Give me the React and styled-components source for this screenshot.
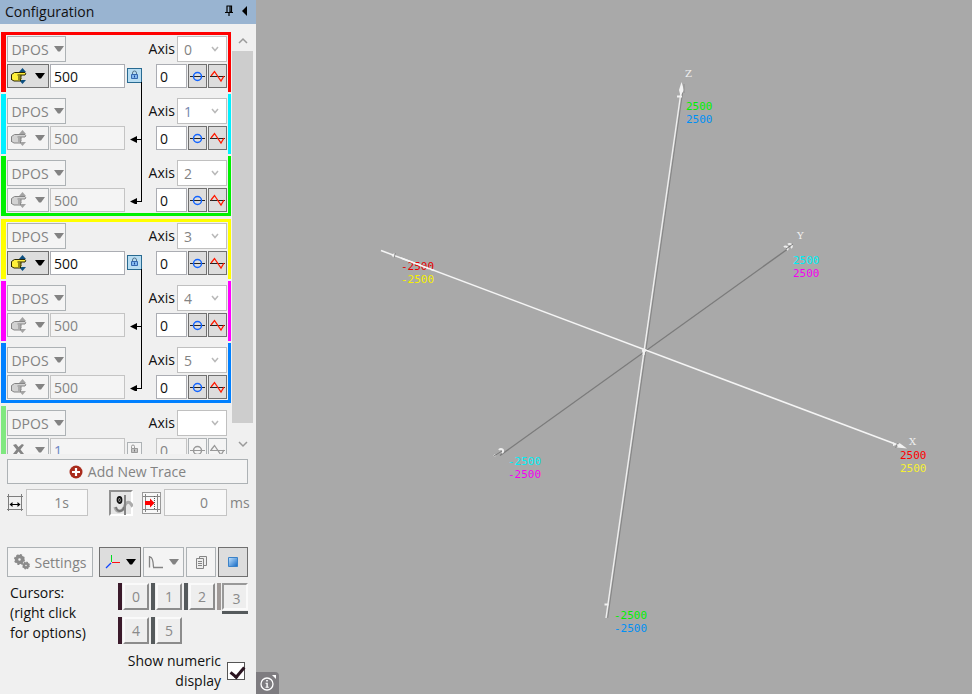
import styled, { createGlobalStyle } from 'styled-components'
import { useState } from 'react'

const GROUPS = [
  [
    { color: '#ff0000', axis: '0', edge: 'top', master: true },
    { color: '#00f0ff', axis: '1' },
    { color: '#00f000', axis: '2', edge: 'bottom' },
  ],
  [
    { color: '#ffff00', axis: '3', edge: 'top', master: true },
    { color: '#ff00ff', axis: '4' },
    { color: '#0080ff', axis: '5', edge: 'bottom' },
  ],
]

const CURSORS = [
  { id: 0, color: '#3b1a2b' },
  { id: 1, color: '#555a5c' },
  { id: 2, color: '#555a5c' },
  { id: 3, color: '#a09a98' },
  { id: 4, color: '#3b1a2b' },
  { id: 5, color: '#555a5c' },
]

function App() {
  return (
    <Page>
      <GlobalStyle />
      <Sidebar />
      <Plot />
    </Page>
  )
}

export default App

function Sidebar() {
  const [active, setActive] = useState(3)

  return (
    <Aside>
      <Header>
        <Title>Configuration</Title>
        <HeaderButton aria-label="Pin"><PinIcon /></HeaderButton>
        <HeaderButton aria-label="Collapse"><CollapseIcon /></HeaderButton>
      </Header>

      <TraceArea>
        <TraceList>
          {GROUPS.map((rows, index) => (
            <TraceGroup key={index}>
              {rows.map((row) => <Trace key={row.axis} {...row} />)}
              <LinkLine />
            </TraceGroup>
          ))}
          <Trace color="#80e880" axis="" empty />
        </TraceList>
        <ScrollBar>
          <ScrollArrow aria-label="Scroll up"><ChevronIcon up /></ScrollArrow>
          <ScrollTrack><ScrollThumb /></ScrollTrack>
          <ScrollArrow aria-label="Scroll down"><ChevronIcon /></ScrollArrow>
        </ScrollBar>
      </TraceArea>

      <Footer>
        <AddButton disabled><PlusIcon />Add New Trace</AddButton>

        <TimeRow>
          <SpanIcon />
          <TimeInput aria-label="Time span" defaultValue="1s" $width={62} disabled />
          <ScrubButton aria-label="Scrub"><ScrubIcon /></ScrubButton>
          <OffsetButton aria-label="Trigger offset"><OffsetIcon /></OffsetButton>
          <TimeInput id="offset" defaultValue="0" $width={63} disabled />
          <Unit htmlFor="offset">ms</Unit>
        </TimeRow>

        <ToolRow>
          <ToolButton $width={86} disabled><GearsIcon />Settings</ToolButton>
          <ToolButton $width={42} aria-label="3D view"><AxesIcon /><Triangle /></ToolButton>
          <ToolButton $width={41} disabled aria-label="Scale"><ScaleIcon /><Triangle /></ToolButton>
          <ToolButton $width={30} disabled aria-label="Copy"><CopyIcon /></ToolButton>
          <ToolButton $width={30} aria-label="Stop"><StopIcon /></ToolButton>
        </ToolRow>

        <CursorRow>
          <CursorText>Cursors:<br />(right click<br />for options)</CursorText>
          <CursorGrid>
            {CURSORS.map(({ id, color }) => (
              <CursorButton key={id} $color={color} $active={active === id} onClick={() => setActive(id)}>
                <span>{id}</span>
              </CursorButton>
            ))}
          </CursorGrid>
        </CursorRow>

        <NumericRow>
          <label htmlFor="numeric">Show numeric<br />display</label>
          <CheckBox id="numeric" type="checkbox" defaultChecked />
        </NumericRow>
      </Footer>
    </Aside>
  )
}

function Trace({ color, axis, edge, master, empty }) {
  const name = empty ? 'new' : axis

  return (
    <TraceRow $color={color} $edge={edge} $empty={empty}>
      <Line $height={26}>
        <ParamButton disabled>DPOS<Triangle /></ParamButton>
        <AxisLabel htmlFor={`axis-${name}`}>Axis</AxisLabel>
        <SelectWrap>
          <AxisSelect id={`axis-${name}`} defaultValue={axis} $blue={axis === '1'} disabled>
            <option>{axis}</option>
          </AxisSelect>
          <ChevronIcon small />
        </SelectWrap>
      </Line>
      <Line $height={24}>
        <ModeButton disabled={!master} aria-label="Scale mode">
          {empty ? <CrossIcon /> : <HandIcon on={master} />}
          <Triangle />
        </ModeButton>
        <NumberInput aria-label="Scale" defaultValue={empty ? '1' : '500'} $width={75} $blue={empty} disabled={!master} />
        <LinkCell>
          {(master || empty) && (
            <LockButton disabled={empty} aria-label="Link"><LockIcon open={empty} /></LockButton>
          )}
        </LinkCell>
        <NumberInput aria-label="Offset" defaultValue="0" $width={31} disabled={empty} />
        <SquareButton disabled={empty} aria-label="Centre"><CentreIcon off={empty} /></SquareButton>
        <SquareButton disabled={empty} aria-label="Wave"><WaveIcon off={empty} /></SquareButton>
      </Line>
    </TraceRow>
  )
}

function Plot() {
  return (
    <PlotArea>
      <PlotSvg viewBox="256 0 716 694" preserveAspectRatio="xMinYMin meet" role="img" aria-label="3D axes">
        <g fill="none">
          <path d="M500 455.500L787 249.500" stroke="#7b7b7b" strokeWidth="1.400" />
          <path d="M606.500 618L681.500 92" stroke="#858585" strokeWidth="1" transform="translate(1.200 0)" />
          <path d="M606 618L681 92" stroke="#f0f0f0" strokeWidth="1.400" />
          <path d="M381 250.500L902 446.500" stroke="#f5f5f5" strokeWidth="1.500" />
        </g>
        <g fill="#f2f2f2">
          <path d="M681.500 82L684 90L680.500 96L679 90Z" />
          <path d="M677 95.500h5v2h-5zM604.500 603.500h4v2h-4z" />
          <path d="M907 448.500L897 447.500L899.500 443Z" />
          <path d="M893 442l3 3l-3 1z" />
          <circle cx="644" cy="350.500" r="2" />
          <path d="M642.500 350h3l-1 5h-2z" />
          <path d="M391.500 255l3-2-1 5z" />
        </g>
        <g fill="none" stroke="#ededed" strokeWidth="2">
          <path d="M784 247a2 2 0 1 1 3 3M788 244.500a2.200 2.200 0 1 1 3 3.500M499 450a2.200 2.200 0 1 1 3 3" />
          <path d="M494 456l1.500-1" />
        </g>
        <path d="M786 249l7-5M494 456l8-5" stroke="#777" strokeWidth="1" />
        <path d="M684 84v9M895.500 448l2-5M395.500 253l-1.500 5" stroke="#8d8d8d" strokeWidth="1" />

        <Tick x="401" y="270" fill="#e60000">-2500</Tick>
        <path d="M401 258L434 270.500" stroke="#f5f5f5" strokeWidth="1.500" />
        <Tick x="401" y="283" fill="#f5f000">-2500</Tick>
        <Tick x="686" y="110" fill="#00f000">2500</Tick>
        <Tick x="686" y="123" fill="#0090f5">2500</Tick>
        <Tick x="793" y="264" fill="#00f0f5">2500</Tick>
        <Tick x="793" y="277" fill="#f500f0">2500</Tick>
        <Tick x="508" y="465" fill="#00f0f5">-2500</Tick>
        <Tick x="508" y="478" fill="#f500f0">-2500</Tick>
        <Tick x="614" y="619" fill="#00f000">-2500</Tick>
        <Tick x="614" y="632" fill="#0090f5">-2500</Tick>
        <Tick x="900" y="459" fill="#ff0000">2500</Tick>
        <Tick x="900" y="472" fill="#f5f032">2500</Tick>
        <AxisName x="685" y="77">Z</AxisName>
        <AxisName x="797" y="239">Y</AxisName>
        <AxisName x="909" y="445">X</AxisName>
      </PlotSvg>
      <InfoButton aria-label="Information">
        <svg width="18" height="18" viewBox="0 0 18 18">
          <circle cx="8" cy="10" r="6" fill="none" stroke="#fff" strokeWidth="1.300" />
          <path d="M7.200 6h1.600v1.600H7.200zM6.500 8.800h2.300v4h1v1H6.500v-1h.9v-3h-.9z" fill="#fff" />
          <path d="M13 1h4v4z" fill="#fff" />
        </svg>
      </InfoButton>
    </PlotArea>
  )
}

/* icons */

function Triangle() {
  return (
    <svg width="10" height="6" viewBox="0 0 10 6">
      <path d="M0 0h10L6 5.500H4z" fill="currentColor" />
    </svg>
  )
}

function ChevronIcon({ up, small }) {
  return (
    <svg width="10" height="8" viewBox="0 0 10 8">
      <path
        d={small ? 'M2 2l3 3.500L8 2' : up ? 'M1 6l4-4 4 4' : 'M1 2l4 4 4-4'}
        fill="none"
        stroke={small ? '#b9b9b9' : '#9a9a9a'}
        strokeWidth="1.500"
      />
    </svg>
  )
}

function PinIcon() {
  return (
    <svg width="8" height="12" viewBox="0 0 8 12">
      <path d="M1.500 1h5M2 1v6M5 1h1.500v6H5zM0 7.500h8M4 7v4" fill="none" stroke="#000" strokeWidth="1.200" />
    </svg>
  )
}

function CollapseIcon() {
  return (
    <svg width="5" height="10" viewBox="0 0 5 10"><path d="M5 0v10L0 5z" /></svg>
  )
}

function HandIcon({ on }) {
  const arrow = on ? '#0d4f80' : '#a3a3a3'
  return (
    <svg width="16" height="18" viewBox="0 0 16 18">
      <path d="M8 5l3.500-4L15 5zM8 13h7l-3.500 4z" fill={arrow} />
      <path
        d="M.5 7.500l3-2H14q1.500 1 0 2.500H10l.5 5-1.500 1H3l-2.500-1.500z"
        fill={on ? '#fff03a' : '#d2d2d2'}
      />
      <path
        d="M.5 13V7.500l3-2H14q1.500 1.200 0 2.500H6.500M10 8v2H7M10 10.300v1.700H7M9.500 12.300v1.700H3L.5 12.500"
        fill="none"
        stroke={on ? '#2a2600' : '#858585'}
      />
    </svg>
  )
}

function CrossIcon() {
  return (
    <svg width="16" height="18" viewBox="0 0 16 18">
      <path d="M2 4l3-1 2.500 3L11 3l2 1-3.500 4.500L13 13l-2.500 1-3-3.500L5 14l-3-1 3.500-4.500z" fill="#858585" />
    </svg>
  )
}

function LockIcon({ open }) {
  return (
    <svg width="9" height="11" viewBox="0 0 9 11">
      <path
        d={open ? 'M1.500 4V2.500a1.500 1.500 0 0 1 3 0V5' : 'M2.500 5V3a2 2 0 0 1 4 0v2'}
        fill="none"
        stroke={open ? '#999' : '#54738b'}
      />
      <path d="M1.500 4.500h6v4h-6z" fill={open ? '#c5c5c5' : '#82b8ef'} stroke={open ? '#999' : '#3468b0'} />
      <path d="M4.500 5.500v2" stroke={open ? '#777' : '#174791'} />
    </svg>
  )
}

function CentreIcon({ off }) {
  return (
    <svg width="15" height="12" viewBox="0 0 15 12">
      <path d="M0 6.500h15" stroke={off ? '#999' : '#222'} />
      <circle cx="7.500" cy="6.500" r="4" fill="none" stroke={off ? '#999' : '#1264ff'} strokeWidth="1.500" />
    </svg>
  )
}

function WaveIcon({ off }) {
  return (
    <svg width="15" height="14" viewBox="0 0 15 14">
      <path d="M0 7.500h15" stroke={off ? '#999' : '#222'} />
      <path d="M1 7l3.500-4.500L11 12l3-5" fill="none" stroke={off ? '#999' : '#ff1a00'} strokeWidth="1.300" />
    </svg>
  )
}

function LinkLine() {
  return (
    <LinkSvg width="15" height="122" viewBox="0 0 15 122">
      <path d="M13.500 0v120M4 57.500h10M4 119.500h10" fill="none" stroke="#000" />
      <path d="M2 57.500l7-3.500v7zM2 119.500l7-3.500v7z" />
    </LinkSvg>
  )
}

function PlusIcon() {
  return (
    <svg width="14" height="14" viewBox="0 0 14 14">
      <circle cx="7" cy="7" r="6.500" fill="#a92b1c" />
      <path d="M7 3v8M3 7h8" stroke="#fff" strokeWidth="2.200" />
    </svg>
  )
}

function SpanIcon() {
  return (
    <svg width="16" height="17" viewBox="0 0 16 17">
      <path d="M1.500 0v17M14.500 0v17M0 2.500h16M0 15.500h16" fill="none" stroke="#7d7d7d" />
      <path d="M3 10.500h10" stroke="#000" />
      <path d="M2.500 10.500l3-2.500v5zM13.500 10.500l-3-2.500v5z" />
    </svg>
  )
}

function ScrubIcon() {
  return (
    <svg width="22" height="24" viewBox="0 0 22 24">
      <path d="M4 15Q5 20 9 19T14 13Q17 8 20 12T22 16" fill="none" stroke="#ababab" strokeWidth="3" />
      <path d="M5 15q1 4 4 4t4-4" fill="none" stroke="#777" strokeWidth="2" />
      <path d="M14 3v20" stroke="#858585" strokeWidth="2" />
      <ellipse cx="8.500" cy="8" rx="2" ry="3" fill="#ddd" stroke="#111" strokeWidth="1.800" />
      <path d="M8 9.500l1-3" stroke="#111" />
    </svg>
  )
}

function OffsetIcon() {
  return (
    <svg width="17" height="18" viewBox="0 0 17 18">
      <path d="M2.500 0v18M14.500 0v18M0 2.500h17M0 15.500h17" fill="none" stroke="#858585" />
      <path d="M11.500 2v14" stroke="#555" strokeDasharray="1 1" />
      <path d="M2 7h5V4.500L11.500 9 7 13.500V11H2z" fill="#ff0000" />
    </svg>
  )
}

function GearsIcon() {
  return (
    <svg width="16" height="16" viewBox="0 0 16 16" fill="none" stroke="#8b8b8b">
      <circle cx="5.500" cy="5.500" r="3" strokeWidth="3.500" />
      <circle cx="5.500" cy="5.500" r="4.700" strokeWidth="1.500" strokeDasharray="2 1.690" />
      <circle cx="12" cy="11.500" r="2" strokeWidth="2.400" />
      <circle cx="12" cy="11.500" r="3.200" strokeWidth="1.400" strokeDasharray="1.500 1.010" />
    </svg>
  )
}

function AxesIcon() {
  return (
    <svg width="16" height="16" viewBox="0 0 16 16" fill="none">
      <path d="M6.500 1v7" stroke="#00df20" />
      <path d="M7 8.500h8" stroke="#ff1010" />
      <path d="M6 9l-5 5" stroke="#1045ff" strokeWidth="1.200" />
    </svg>
  )
}

function ScaleIcon() {
  return (
    <svg width="16" height="16" viewBox="0 0 16 16">
      <path d="M1.500 2v11.500M5 13.500h10M2 3q3 0 3.500 10" fill="none" stroke="#858585" strokeWidth="1.300" />
    </svg>
  )
}

function CopyIcon() {
  return (
    <svg width="13" height="15" viewBox="0 0 13 15" fill="#eee" stroke="#858585">
      <path d="M4.500 1.500h7v9h-7z" />
      <path d="M1.500 3.500h7v10h-7z" />
      <path d="M3 6.500h4M3 8.500h4M3 10.500h4" />
    </svg>
  )
}

function StopIcon() {
  return (
    <svg width="10" height="10" viewBox="0 0 10 10">
      <defs>
        <linearGradient id="stop" x1="0" y1="0" x2="1" y2="1">
          <stop offset="0" stopColor="#c5e5ff" />
          <stop offset="1" stopColor="#1167c4" />
        </linearGradient>
      </defs>
      <path d="M.5.5h9v9h-9z" fill="url(#stop)" stroke="#3b82c8" />
    </svg>
  )
}

/* styles */

const GlobalStyle = createGlobalStyle`
  * {
    box-sizing: border-box;
  }
  body {
    margin: 0;
    overflow: hidden;
  }
  body, button, input, select {
    font-family: "Open Sans", "Noto Sans", sans-serif;
    font-size: 14px;
    color: #111;
  }
  button, input, select {
    margin: 0;
    border-radius: 0;
    padding: 0;
  }
  svg {
    display: block;
    flex-shrink: 0;
  }
`

const Page = styled.div`
  display: flex;
  height: 100vh;
`

const Aside = styled.aside`
  display: flex;
  flex-direction: column;
  width: 256px;
  flex-shrink: 0;
  background: #f0f0f0;
`

const Header = styled.header`
  display: flex;
  align-items: center;
  height: 24px;
  padding: 0 9px 2px 5px;
  gap: 9px;
  background: #99b4d1;
`

const Title = styled.h1`
  flex: 1;
  margin: 0;
  font-size: 14px;
  font-weight: 400;
`

const HeaderButton = styled.button`
  border: 0;
  background: none;
`

const TraceArea = styled.div`
  display: flex;
  flex: 1;
  min-height: 0;
  margin-top: 7px;
  padding: 0 3px 0 1px;
`

const TraceList = styled.div`
  display: flex;
  flex-direction: column;
  flex: 1;
  gap: 3px;
  padding: 1px 1px 0 0;
  overflow: hidden;
`

const TraceGroup = styled.div`
  display: flex;
  flex-direction: column;
  flex-shrink: 0;
  gap: 2px;
  position: relative;
`

const LinkSvg = styled.svg`
  position: absolute;
  left: 127px;
  top: 50px;
  pointer-events: none;
`

const TraceRow = styled.div`
  display: flex;
  flex-direction: column;
  flex-shrink: 0;
  gap: 2px;
  height: 60px;
  padding-left: 1px;
  padding-right: 1px;
  padding-top: ${({ $edge }) => $edge === 'top' ? '1px' : '4px'};
  border: 0 solid ${({ $color }) => $color};
  border-left-width: 5px;
  border-right-width: 3px;
  border-right-color: ${({ $color, $empty }) => $empty ? 'transparent' : $color};
  border-top-width: ${({ $edge }) => $edge === 'top' ? '3px' : '0'};
  border-bottom-width: ${({ $edge }) => $edge === 'bottom' ? '3px' : '0'};
`

const Line = styled.div`
  display: flex;
  flex-shrink: 0;
  gap: 1px;
  height: ${({ $height }) => $height}px;
`

const BaseButton = styled.button`
  display: flex;
  align-items: center;
  justify-content: center;
  border: 1px solid #707070;
  background: #dddddd;
  color: #000;

  &:disabled {
    border-color: #adb2b5;
    background: #f4f4f4;
    color: #838383;
  }
`

const ParamButton = styled(BaseButton)`
  width: 59px;
  padding-left: 2px;
  gap: 5px;
`

const ModeButton = styled(BaseButton)`
  width: 42px;
  gap: 8px;
`

const SquareButton = styled(BaseButton)`
  width: 19px;
`

const AxisLabel = styled.label`
  flex: 1;
  padding-right: 1px;
  text-align: right;
  line-height: 26px;
`

const SelectWrap = styled.div`
  display: flex;
  align-items: center;
  position: relative;
  width: 50px;

  svg {
    position: absolute;
    right: 7px;
    pointer-events: none;
  }
`

const AxisSelect = styled.select`
  appearance: none;
  width: 100%;
  height: 100%;
  padding-left: 6px;
  border: 1px solid #c0c0c0;
  background: #fff;
  color: ${({ $blue }) => $blue ? '#7586ae' : '#838383'};
  opacity: 1;
`

const NumberInput = styled.input`
  width: ${({ $width }) => $width}px;
  padding-left: 3px;
  border: 1px solid #abadb3;
  background: #fff;

  &:disabled {
    border-color: #c4c4c4;
    background: #f4f4f4;
    color: ${({ $blue }) => $blue ? '#6c86c4' : '#838383'};
  }
`

const LinkCell = styled.div`
  flex: 1;
  padding: 4px 0 0 1px;
`

const LockButton = styled(BaseButton)`
  width: 15px;
  height: 15px;
  border-color: #286a91;
  background: #b8ddf2;
`

const ScrollBar = styled.div`
  display: flex;
  flex-direction: column;
  width: 21px;
`

const ScrollArrow = styled.button`
  display: flex;
  align-items: center;
  justify-content: center;
  height: 20px;
  border: 0;
  background: none;
`

const ScrollTrack = styled.div`
  flex: 1;
`

const ScrollThumb = styled.div`
  height: 97%;
  background: #cdcdcd;
`

const Footer = styled.div`
  display: flex;
  flex-direction: column;
  padding: 5px 8px 3px 7px;
`

const AddButton = styled(BaseButton)`
  height: 25px;
  gap: 5px;
`

const TimeRow = styled.div`
  display: flex;
  align-items: center;
  height: 27px;
  margin-top: 5px;
  gap: 3px;
`

const TimeInput = styled.input`
  width: ${({ $width }) => $width}px;
  height: 27px;
  padding-right: 18px;
  border: 1px solid #c4c4c4;
  background: #f8f8f8;
  color: #838383;
  text-align: right;
`

const ScrubButton = styled.button`
  display: flex;
  width: 24px;
  height: 26px;
  margin-left: 18px;
  border: 2px solid;
  border-color: #909090 #fff #fff #909090;
  background: #e6e6e6;
`

const OffsetButton = styled(BaseButton)`
  width: 21px;
  height: 22px;
  margin-left: 6px;
  border-color: #999;
  background: #f8f8f8;
`

const Unit = styled.label`
  color: #838383;
`

const ToolRow = styled.div`
  display: flex;
  gap: 2px;
  margin-top: 31px;

  > :first-child {
    margin-right: auto;
  }
`

const ToolButton = styled(BaseButton)`
  width: ${({ $width }) => $width}px;
  height: 30px;
  gap: 5px;
`

const CursorRow = styled.div`
  display: flex;
  justify-content: space-between;
  margin-top: 6px;
`

const CursorText = styled.div`
  padding-left: 3px;
  line-height: 20px;
`

const CursorGrid = styled.div`
  display: grid;
  grid-template-columns: repeat(4, 31px);
  grid-auto-rows: 27px;
  gap: 7px 2px;
`

const CursorButton = styled.button`
  position: relative;
  display: flex;
  border: 0;
  border-left: 4px solid ${({ $color }) => $color};
  background: none;
  color: #8a8a8a;

  span {
    display: flex;
    align-items: center;
    justify-content: center;
    flex: 1;
    height: 100%;
    margin-left: 1px;
    padding: ${({ $active }) => $active ? '4px 0 0 3px' : '0'};
    border: 2px solid;
    border-color: ${({ $active }) => $active ? '#999 #fafafa #fafafa #999' : '#fafafa #8c8c8c #8c8c8c #fafafa'};
    background: #eeeeee;
  }

  &::after {
    content: '';
    display: ${({ $active }) => $active ? 'block' : 'none'};
    position: absolute;
    left: 1px;
    right: 0;
    bottom: -4px;
    height: 3px;
    background: #555a5c;
  }
`

const NumericRow = styled.div`
  display: flex;
  align-items: center;
  justify-content: flex-end;
  gap: 6px;
  margin-top: 7px;
  padding-right: 3px;
  text-align: right;
  line-height: 20px;
`

const CheckBox = styled.input`
  appearance: none;
  width: 18px;
  height: 18px;
  position: relative;
  border: 1px solid #555;
  background: #fff;

  &:checked::after {
    content: '';
    position: absolute;
    left: 5px;
    top: 1px;
    width: 6px;
    height: 11px;
    border: solid #2a1420;
    border-width: 0 3px 3px 0;
    transform: rotate(40deg);
  }
`

const PlotArea = styled.main`
  position: relative;
  flex: 1;
  min-width: 0;
  background: #a9a9a9;
`

const PlotSvg = styled.svg`
  width: 100%;
  height: 100%;
`

const Tick = styled.text`
  font-family: "DejaVu Sans Mono", monospace;
  font-size: 11px;
`

const AxisName = styled.text`
  font-family: "DejaVu Serif", serif;
  font-size: 10px;
  fill: #f0f0f0;
`

const InfoButton = styled.button`
  display: flex;
  align-items: center;
  justify-content: center;
  position: absolute;
  left: 0;
  bottom: 0;
  width: 23px;
  height: 22px;
  border: 0;
  border-top-right-radius: 4px;
  background: #7e7c80;
`
